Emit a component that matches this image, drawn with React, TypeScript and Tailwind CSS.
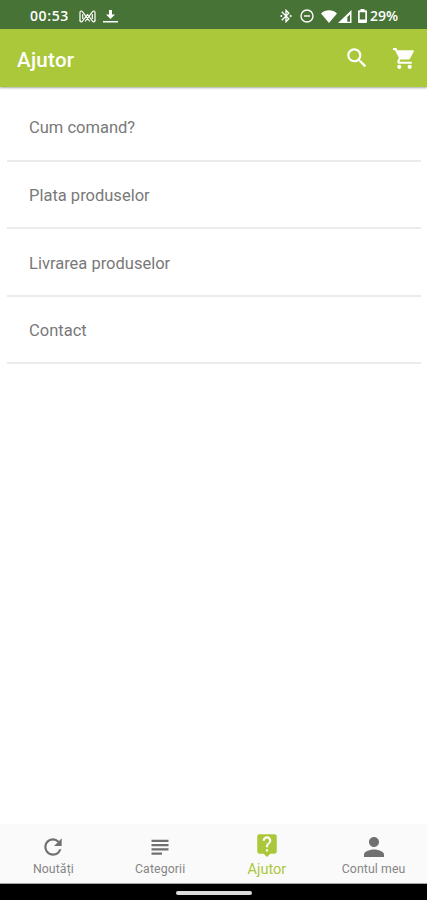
import type { ReactNode } from "react";
import {
  MdBluetoothConnected,
  MdLiveHelp,
  MdPerson,
  MdRefresh,
  MdSearch,
  MdShoppingCart,
} from "react-icons/md";

const helpTopics = [
  "Cum comand?",
  "Plata produselor",
  "Livrarea produselor",
  "Contact",
];

export default function App() {
  return (
    <div className="flex h-[900px] w-[427px] flex-col overflow-hidden bg-white font-['Roboto',sans-serif]">
      <StatusBar />
      <AppBar title="Ajutor" />
      <main className="flex-1 pt-[7px] pr-[6px] pl-[7px]">
        <ul>
          {helpTopics.map((topic) => (
            <li
              key={topic}
              className="flex h-[67.6px] items-center border-b-2 border-[#ebebeb] pt-[4px] pl-[22px] text-[16.5px] text-[#797979]"
            >
              {topic}
            </li>
          ))}
        </ul>
      </main>
      <nav className="grid h-[60px] shrink-0 grid-cols-4 border-b border-[#a5a5a5] bg-[#fafafa]">
        <NavItem label="Noutăți" icon={<MdRefresh size={26} />} />
        <NavItem label="Categorii" icon={<LinesIcon />} />
        <NavItem label="Ajutor" active icon={<MdLiveHelp size={26} />} />
        <NavItem label="Contul meu" icon={<MdPerson size={30} />} />
      </nav>
      <div className="flex h-4 shrink-0 justify-center bg-black pt-[7px]">
        <div className="h-[4px] w-[76px] rounded-sm bg-[#dcdcdc]" />
      </div>
    </div>
  );
}

function LinesIcon() {
  return (
    <svg width="18" height="16" viewBox="0 0 18 16" fill="currentColor">
      <path d="M.5.700h17v2.300H.5zM.5 5h17v2.300H.5zM.5 9.300h17v2.300H.5zM.5 13.600h10.500v2.200H.5z" />
    </svg>
  );
}

function StatusBar() {
  return (
    <div className="flex h-[29px] shrink-0 items-center bg-[#487336] pt-[3px] pr-[28px] pl-[30px] text-white">
      <span className="w-[40px] font-['Open_Sans',sans-serif] text-[14px] leading-none font-semibold tracking-[0.6px]">
        00:53
      </span>
      <svg
        className="ml-[9px]"
        width="17"
        height="13"
        viewBox="0 0 17 13"
        fill="none"
        stroke="currentColor"
        strokeWidth="1.2"
        strokeLinejoin="round"
        strokeLinecap="round"
      >
        <path d="M1 10.500V2.500C1 .8 2.700.5 3.600 1.800L10.500 11M16 10.500V2.500C16 .8 14.300.5 13.400 1.800L6.500 11" />
        <path d="M1 10.500c0 1.500 1.600 1.800 2.500.6L8.500 4.500l5 6.600c.9 1.200 2.500.9 2.500-.6M3.700 4.500v4M13.300 4.500v4" />
      </svg>
      <svg
        className="ml-[7px]"
        width="15"
        height="13"
        viewBox="0 0 15 13"
        fill="currentColor"
      >
        <path d="M6 0h3v4.500h3L7.500 9 3 4.500h3zM0 11h15v1.600H0z" />
      </svg>
      <div className="ml-auto flex items-center">
        <MdBluetoothConnected className="mr-[6px]" size={16} />
        <svg
          className="mr-[7px]"
          width="14"
          height="14"
          viewBox="0 0 14 14"
          fill="none"
          stroke="currentColor"
          strokeWidth="1.4"
        >
          <circle cx="7" cy="7" r="6" />
          <path d="M4 7h6" />
        </svg>
        <svg width="16" height="13" viewBox="0 0 16 13" fill="currentColor">
          <path d="M0 3.500C4.500-.9 11.500-.9 16 3.500L8 13z" />
        </svg>
        <svg
          className="ml-[1px]"
          width="14"
          height="13"
          viewBox="0 0 14 13"
          fill="currentColor"
        >
          <path
            fillRule="evenodd"
            d="M13.500 0v13H0zM12 4.500 9.300 7v4.700H12z"
          />
        </svg>
        <svg
          className="ml-[6px]"
          width="9"
          height="14"
          viewBox="0 0 9 14"
          fill="currentColor"
        >
          <path
            fillRule="evenodd"
            d="M2.500 0h4v1.300H8q1 0 1 1V13q0 1-1 1H1q-1 0-1-1V2.300q0-1 1-1h1.500zM1.700 3.200V10.500h5.600V3.200z"
          />
        </svg>
        <span className="ml-[3px] w-[29px] font-['Open_Sans',sans-serif] text-[14px] leading-none font-semibold">
          29%
        </span>
      </div>
    </div>
  );
}

function AppBar({ title }: { title: string }) {
  return (
    <header className="flex h-[58px] shrink-0 items-center bg-[#abc73a] pr-[10px] pl-[17px] text-white shadow-[0_1px_2px_rgba(0,0,0,0.35)]">
      <h1 className="pt-[4px] text-[20.5px] leading-none font-medium tracking-[0.3px]">
        {title}
      </h1>
      <MdSearch className="ml-auto" size={26} />
      <MdShoppingCart className="ml-[22px]" size={25} />
    </header>
  );
}

function NavItem({
  label,
  icon,
  active = false,
}: {
  label: string;
  icon: ReactNode;
  active?: boolean;
}) {
  return (
    <div
      className={`flex flex-col items-center ${active ? "text-[#abc73a]" : "text-[#707070]"}`}
    >
      <div
        className={`flex h-[29px] items-center ${active ? "mt-[6px] mb-[3px]" : "mt-[8px]"}`}
      >
        {icon}
      </div>
      <span
        className={
          active
            ? "text-[14.5px] leading-[16px]"
            : "text-[12.3px] leading-[16px] tracking-[0.1px] text-[#858585]"
        }
      >
        {label}
      </span>
    </div>
  );
}
